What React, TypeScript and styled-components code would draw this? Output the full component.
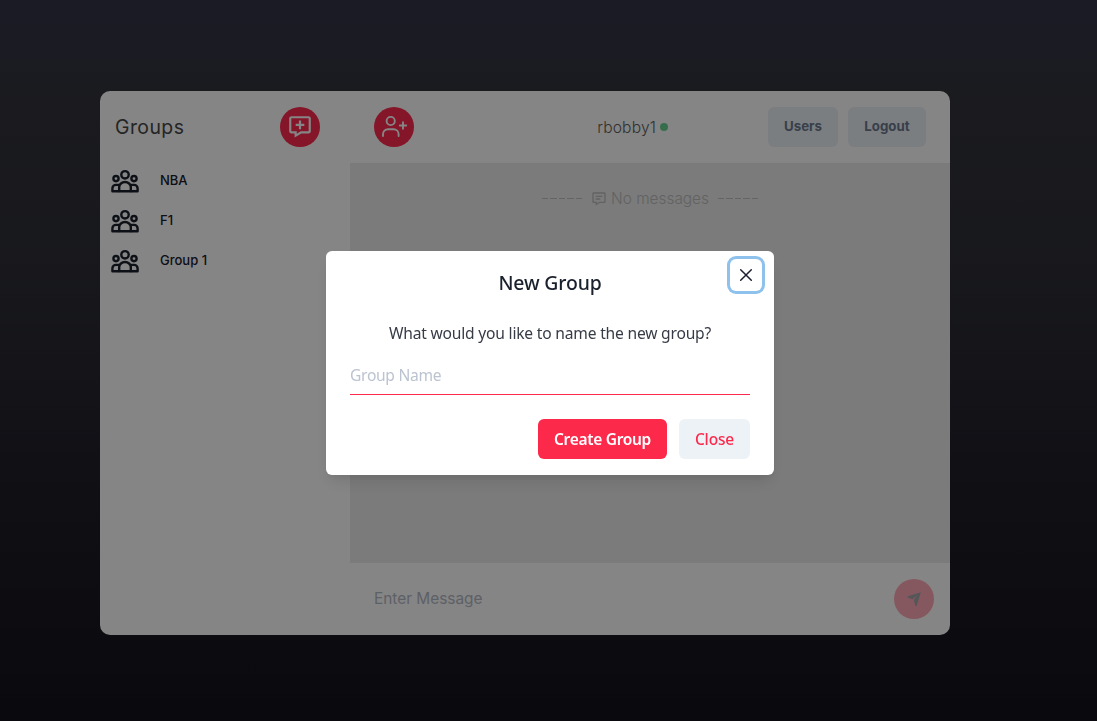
import React from "react";
import styled, { createGlobalStyle } from "styled-components";
import { BiMessageAdd, BiMessageDetail } from "react-icons/bi";

const GlobalStyle = createGlobalStyle`
  *, *::before, *::after { box-sizing: border-box; }
  body {
    margin: 0;
    overflow: hidden;
    font-family: Inter, sans-serif;
    color: #1a202c;
  }
  button, input { font: inherit; border: 0; padding: 0; background: none; outline: 0; }
  svg { display: block; flex: none; }
`;

const Page = styled.div`
  height: 100vh;
  padding: 91px 100px 0;
  background: linear-gradient(#35354a 0%, #33343d 12%, #2e2f37 38%, #1f1e28 68%, #14131b 100%);
`;

const Card = styled.main`
  display: flex;
  width: 850px;
  height: 544px;
  border-radius: 10px;
  overflow: hidden;
  background: #fff;
`;

const Sidebar = styled.aside`
  width: 250px;
`;

const SidebarHeader = styled.header`
  display: flex;
  align-items: center;
  justify-content: space-between;
  height: 69px;
  padding: 3px 30px 0 15px;
`;

const SidebarTitle = styled.h1`
  margin: 0;
  font-size: 19.4px;
  font-weight: 400;
  letter-spacing: 0.45px;
  color: #484848;
`;

const RoundButton = styled.button<{ $disabled?: boolean }>`
  display: grid;
  place-items: center;
  width: 40px;
  height: 40px;
  border-radius: 50%;
  background: #ff2a4f;
  color: ${(p) => (p.$disabled ? "#1a202c" : "#fff")};
  opacity: ${(p) => (p.$disabled ? 0.4 : 1)};
`;

const GroupRow = styled.div`
  display: flex;
  align-items: center;
  gap: 20px;
  height: 40px;
  padding-left: 10px;
`;

const GroupName = styled.span`
  font-size: 13px;
  font-weight: 500;
  line-height: 20px;
`;

const Chat = styled.section`
  flex: 1;
  display: flex;
  flex-direction: column;
`;

const ChatHeader = styled.header`
  display: flex;
  align-items: center;
  height: 72px;
  padding: 0 24px;
`;

const UserName = styled.div`
  display: flex;
  align-items: center;
  gap: 4px;
  margin-left: auto;
  margin-right: 100px;
  font-size: 15.6px;
  font-weight: 300;
  letter-spacing: 0.15px;
  color: #5c5c5c;
`;

const OnlineDot = styled.span`
  width: 8px;
  height: 8px;
  border-radius: 50%;
  background: #68d391;
`;

const HeaderButton = styled.button<{ $width: number }>`
  width: ${(p) => p.$width}px;
  height: 40px;
  padding-bottom: 2px;
  border-radius: 6px;
  background: #ebf1f6;
  color: #6c7a90;
  font-size: 13.3px;
  font-weight: 700;
  & + & { margin-left: 10px; }
`;

const Messages = styled.div`
  height: 400px;
  padding-top: 24px;
  background: #ebebeb;
`;

const EmptyNotice = styled.div`
  display: flex;
  align-items: center;
  justify-content: center;
  height: 23px;
  font-size: 15.4px;
  font-weight: 300;
  color: #bdbdbd;
`;

const NoticeText = styled.span`
  margin-left: 4px;
`;

const Dashes = styled.span`
  display: flex;
  gap: 2px;
  margin: 0 9px;
  & > i { width: 6.4px; height: 1px; background: #c0c0c0; }
`;

const Composer = styled.div`
  display: flex;
  align-items: center;
  height: 72px;
  padding: 0 16px 0 24px;
`;

const MessageInput = styled.input`
  flex: 1;
  padding-bottom: 2px;
  font-size: 15.4px;
  &::placeholder { color: #b4b8c5; opacity: 1; }
`;

const Overlay = styled.div`
  position: fixed;
  inset: 0;
  background: rgba(0, 0, 0, 0.48);
`;

const DialogViewport = styled.div`
  display: flex;
  align-items: center;
  justify-content: center;
  width: 1100px;
  height: 726px;
`;

const Dialog = styled.div`
  position: relative;
  width: 448px;
  height: 224px;
  border-radius: 6px;
  background: #fff;
  font-family: "Noto Sans", "Open Sans", sans-serif;
  box-shadow: 0 10px 15px -3px rgba(0, 0, 0, 0.1), 0 4px 6px -2px rgba(0, 0, 0, 0.05);
`;

const DialogTitle = styled.h2`
  margin: 0;
  padding: 17px 24px 15px;
  font-size: 19.4px;
  line-height: 30px;
  letter-spacing: -0.15px;
  font-weight: 500;
  text-align: center;
`;

const DialogBody = styled.div`
  padding: 8px 24px;
`;

const Question = styled.p`
  margin: 0;
  line-height: 24px;
  font-size: 15.6px;
  letter-spacing: -0.2px;
  text-align: center;
  color: #363b46;
`;

const NameInput = styled.input`
  display: block;
  width: 100%;
  height: 40px;
  margin-top: 10px;
  padding-top: 1px;
  border-bottom: 1px solid #fd294b;
  font-size: 15.6px;
  letter-spacing: -0.3px;
  &::placeholder { color: #bcc3d0; opacity: 1; }
`;

const DialogFooter = styled.footer`
  display: flex;
  justify-content: flex-end;
  gap: 12px;
  padding: 16px 24px;
`;

const DialogButton = styled.button<{ $primary?: boolean }>`
  width: ${(p) => (p.$primary ? 129 : 71)}px;
  height: 40px;
  border-radius: 6px;
  background: ${(p) => (p.$primary ? "#fd294b" : "#edf2f7")};
  color: ${(p) => (p.$primary ? "#fff" : "#fd294b")};
  font-size: 15.5px;
  letter-spacing: ${(p) => (p.$primary ? -0.3 : -0.15)}px;
  font-weight: ${(p) => (p.$primary ? 600 : 500)};
`;

const CloseIconButton = styled.button`
  position: absolute;
  top: 8px;
  right: 12px;
  display: grid;
  place-items: center;
  width: 32px;
  height: 32px;
  border-radius: 6px;
  color: #1a202c;
  box-shadow: 0 0 0 3px rgba(66, 153, 225, 0.6);
`;

const TeamIcon = () => (
  <svg width="30" height="28" viewBox="0 -3 30 28" fill="none" stroke="#1a202c" strokeWidth="2.4" strokeLinejoin="round">
    <circle cx="15" cy="5.8" r="3.7" />
    <circle cx="6" cy="9.6" r="2.6" />
    <circle cx="24" cy="9.6" r="2.6" />
    <path d="M9.2 22.2V18a5.8 5 0 0 1 11.6 0v4.2z" />
    <path d="M9.4 15.9H6a3.6 3.6 0 0 0-3.6 3.6v2.7h6.8M20.6 15.9h3.4a3.6 3.6 0 0 1 3.6 3.6v2.7h-6.8" />
  </svg>
);

const AddUserIcon = () => (
  <svg width="40" height="40" viewBox="0 0 40 40" fill="none" stroke="currentColor" strokeWidth="1.9" strokeLinecap="round">
    <circle cx="16.7" cy="14" r="4.1" />
    <path d="M9 29v-1.8a5 5 0 0 1 5-5h5.6a5 5 0 0 1 5 5V29M29 15.3v6.4M25.8 18.5h6.4" />
  </svg>
);

const SendIcon = () => (
  <svg width="40" height="40" viewBox="0 0 40 40" fill="currentColor">
    <path d="M26.8 13.2 13.7 17.2v1.3l4.8 1.7 4.9-4.2-3.6 5 1.6 6h1.2z" />
  </svg>
);

const CloseIcon = () => (
  <svg width="14" height="14" viewBox="0 0 14 14" stroke="currentColor" strokeWidth="1.5" strokeLinecap="round">
    <path d="M1.7 1.7l10.6 10.6M12.3 1.7 1.7 12.3" />
  </svg>
);

const DashRun = () => (
  <Dashes>{[0, 1, 2, 3, 4].map((n) => <i key={n} />)}</Dashes>
);

const groups = ["NBA", "F1", "Group 1"];

export default function App() {
  return (
    <>
      <GlobalStyle />
      <Page>
        <Card>
          <Sidebar>
            <SidebarHeader>
              <SidebarTitle>Groups</SidebarTitle>
              <RoundButton aria-label="New group"><BiMessageAdd size={26} /></RoundButton>
            </SidebarHeader>
            {groups.map((name) => (
              <GroupRow key={name}>
                <TeamIcon />
                <GroupName>{name}</GroupName>
              </GroupRow>
            ))}
          </Sidebar>
          <Chat>
            <ChatHeader>
              <RoundButton aria-label="Add user"><AddUserIcon /></RoundButton>
              <UserName>rbobby1<OnlineDot /></UserName>
              <HeaderButton $width={70}>Users</HeaderButton>
              <HeaderButton $width={78}>Logout</HeaderButton>
            </ChatHeader>
            <Messages>
              <EmptyNotice>
                <DashRun />
                <BiMessageDetail size={16} />
                <NoticeText>No messages</NoticeText>
                <DashRun />
              </EmptyNotice>
            </Messages>
            <Composer>
              <MessageInput placeholder="Enter Message" />
              <RoundButton $disabled aria-label="Send"><SendIcon /></RoundButton>
            </Composer>
          </Chat>
        </Card>
      </Page>
      <Overlay>
        <DialogViewport>
          <Dialog role="dialog">
            <DialogTitle>New Group</DialogTitle>
            <CloseIconButton aria-label="Close dialog"><CloseIcon /></CloseIconButton>
            <DialogBody>
              <Question>What would you like to name the new group?</Question>
              <NameInput placeholder="Group Name" />
            </DialogBody>
            <DialogFooter>
              <DialogButton $primary>Create Group</DialogButton>
              <DialogButton>Close</DialogButton>
            </DialogFooter>
          </Dialog>
        </DialogViewport>
      </Overlay>
    </>
  );
}
